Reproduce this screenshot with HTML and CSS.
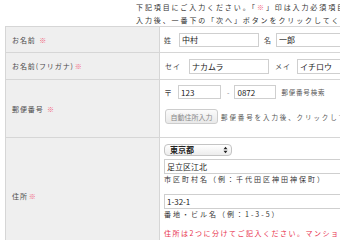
FILE: index.html
```html
<!DOCTYPE html>
<html lang="ja">
<head>
<meta charset="utf-8">
<link rel="stylesheet" href="styles.css">
</head>
<body>
<div class="page">
  <div class="intro">
    <p>下記項目にご入力ください。「<span class="req">※</span>」印は入力必須項目です。</p>
    <p>入力後、一番下の「次へ」ボタンをクリックしてください。</p>
  </div>
  <div class="form">
    <div class="lbl r1">お名前 <span class="req">※</span></div>
    <div class="val r1">
      <span class="pre">姓</span><input class="in w80" value="中村"><span class="mid">名</span><input class="in w80" value="一郎">
    </div>

    <div class="lbl r2">お名前(フリガナ)<span class="req">※</span></div>
    <div class="val r2">
      <span class="pre kana">セイ</span><input class="in w80 h15" value="ナカムラ"><span class="mid kana">メイ</span><input class="in w80 h15" value="イチロウ">
    </div>

    <div class="lbl r3">郵便番号 <span class="req">※</span></div>
    <div class="val r3 postal">
      <div class="line">
        <span class="zip">〒</span><input class="in w43" value="123"><span class="dash">-</span><input class="in w42" value="0872"><span class="note">郵便番号検索</span>
      </div>
      <div class="line">
        <button class="btn" type="button">自動住所入力</button><span class="note2">郵便番号を入力後、クリックしてください。</span>
      </div>
    </div>

    <div class="lbl r4">住所<span class="req">※</span></div>
    <div class="val r4 addr">
      <span class="sel">
        <select class="pref"><option>東京都</option></select>
        <svg class="arrows" width="5" height="8" viewBox="0 0 5 8"><path d="M0.5 3.2 L2.5 0.8 L4.5 3.2 Z M0.5 4.8 L2.5 7.2 L4.5 4.8 Z" fill="#222"/></svg>
      </span>
      <input class="in wide" value="足立区江北">
      <p class="hint">市区町村名（例：千代田区神田神保町）</p>
      <input class="in wide h16" value="1-32-1">
      <p class="hint">番地・ビル名（例：1-3-5）</p>
      <p class="warn">住所は2つに分けてご記入ください。マンション名なども忘れずにご記入ください。</p>
    </div>
  </div>
</div>
</body>
</html>
```

FILE: styles.css
```css
html, body {
  margin: 0;
  padding: 0;
  overflow: hidden;
  background: #fff;
}
body {
  font-family: "Noto Sans CJK JP", "Noto Sans", sans-serif;
  color: #333;
}
.page {
  width: 340px;
  height: 240px;
  overflow: hidden;
}
.intro {
  box-sizing: border-box;
  height: 26px;
  padding: 1px 0 0 136px;
  font-size: 7px;
  letter-spacing: 1.9px;
  line-height: 13px;
  white-space: nowrap;
  color: #333;
}
.intro p { margin: 0; }
.req { color: #f2607a; }

.form {
  margin-left: 5px;
  width: 440px;
  display: grid;
  grid-template-columns: 154px 1fr;
  grid-template-rows: 26px 27px 58px 113px;
  border-top: 1px solid #d6d6d6;
  border-left: 1px solid #d6d6d6;
}
.lbl, .val {
  box-sizing: border-box;
  border-right: 1px solid #d6d6d6;
  border-bottom: 1px solid #d6d6d6;
}
.lbl {
  background: #efefef;
  display: flex;
  align-items: center;
  padding-left: 6px;
  font-size: 7px;
  letter-spacing: 0.9px;
  color: #4a4a4a;
  white-space: pre;
}
.lbl .req { margin-left: 1px; }
.r4.lbl { padding-top: 4px; }
.val {
  background: #fff;
  display: flex;
  align-items: center;
  padding-left: 4px;
  white-space: nowrap;
  font-size: 7px;
  color: #444;
}
.in {
  box-sizing: border-box;
  height: 14px;
  margin: 0;
  padding: 0 0 0 2px;
  border: 1px solid #cfcfcf;
  border-radius: 0;
  background: #fff;
  font-family: "Noto Sans CJK JP", "Noto Sans", sans-serif;
  font-size: 8px;
  color: #222;
  outline: none;
}
.h15 { height: 15px; }
.h16 { height: 16px; }
.w80 { width: 80px; }
.w43 { width: 43px; }
.w42 { width: 42px; }
.wide { width: 260px; display: block; height: 15px; }

.pre { margin-right: 8px; }
.pre.kana { letter-spacing: 1px; margin-right: 8px; margin-left: 1px; }
.mid { margin: 0 5px 0 5px; }
.mid.kana { letter-spacing: 1px; margin: 0 6px 0 6px; }

.postal {
  flex-direction: column;
  align-items: flex-start;
  justify-content: flex-start;
  padding-top: 5px;
  gap: 10px;
}
.line { display: flex; align-items: center; }
.zip { font-size: 8px; margin-right: 6px; }
.dash { margin: 0 5px 0 6px; font-size: 7px; color: #888; }
.note { margin-left: 5px; letter-spacing: 0.8px; color: #555; font-size: 6.5px; }
.note2 { margin-left: 3px; letter-spacing: 1.9px; color: #555; font-size: 6.5px; }
.btn {
  box-sizing: border-box;
  width: 53px;
  height: 15px;
  margin: 0 0 0 1px;
  padding: 0;
  border: 1px solid #cdcdcd;
  border-radius: 3px;
  background: linear-gradient(#fbfbfb, #e9e9e9);
  font-family: "Noto Sans CJK JP", "Noto Sans", sans-serif;
  font-size: 7px;
  color: #888;
}

.addr {
  flex-direction: column;
  align-items: flex-start;
  justify-content: flex-start;
  padding-top: 6px;
}
.sel {
  position: relative;
  display: block;
  height: 12px;
}
.pref {
  box-sizing: border-box;
  appearance: none;
  -webkit-appearance: none;
  width: 68px;
  height: 12px;
  margin: 0;
  padding: 0 0 0 5px;
  border: 1px solid #c4c4c4;
  border-radius: 4px;
  background: linear-gradient(#ffffff, #ececec);
  font-family: "Noto Sans CJK JP", "Noto Sans", sans-serif;
  font-size: 8px;
  line-height: 10px;
  color: #222;
  font-weight: bold;
}
.arrows {
  position: absolute;
  right: 4px;
  top: 2px;
}
.addr .in.wide:first-of-type { margin-top: 3px; }
.hint {
  margin: 0;
  font-size: 7px;
  letter-spacing: 2px;
  line-height: 10px;
  color: #333;
}
.hint + .in { margin-top: 10px; }
.warn {
  margin: 9px 0 0;
  font-size: 7px;
  letter-spacing: 1.5px;
  line-height: 10px;
  color: #e8304c;
}
```
